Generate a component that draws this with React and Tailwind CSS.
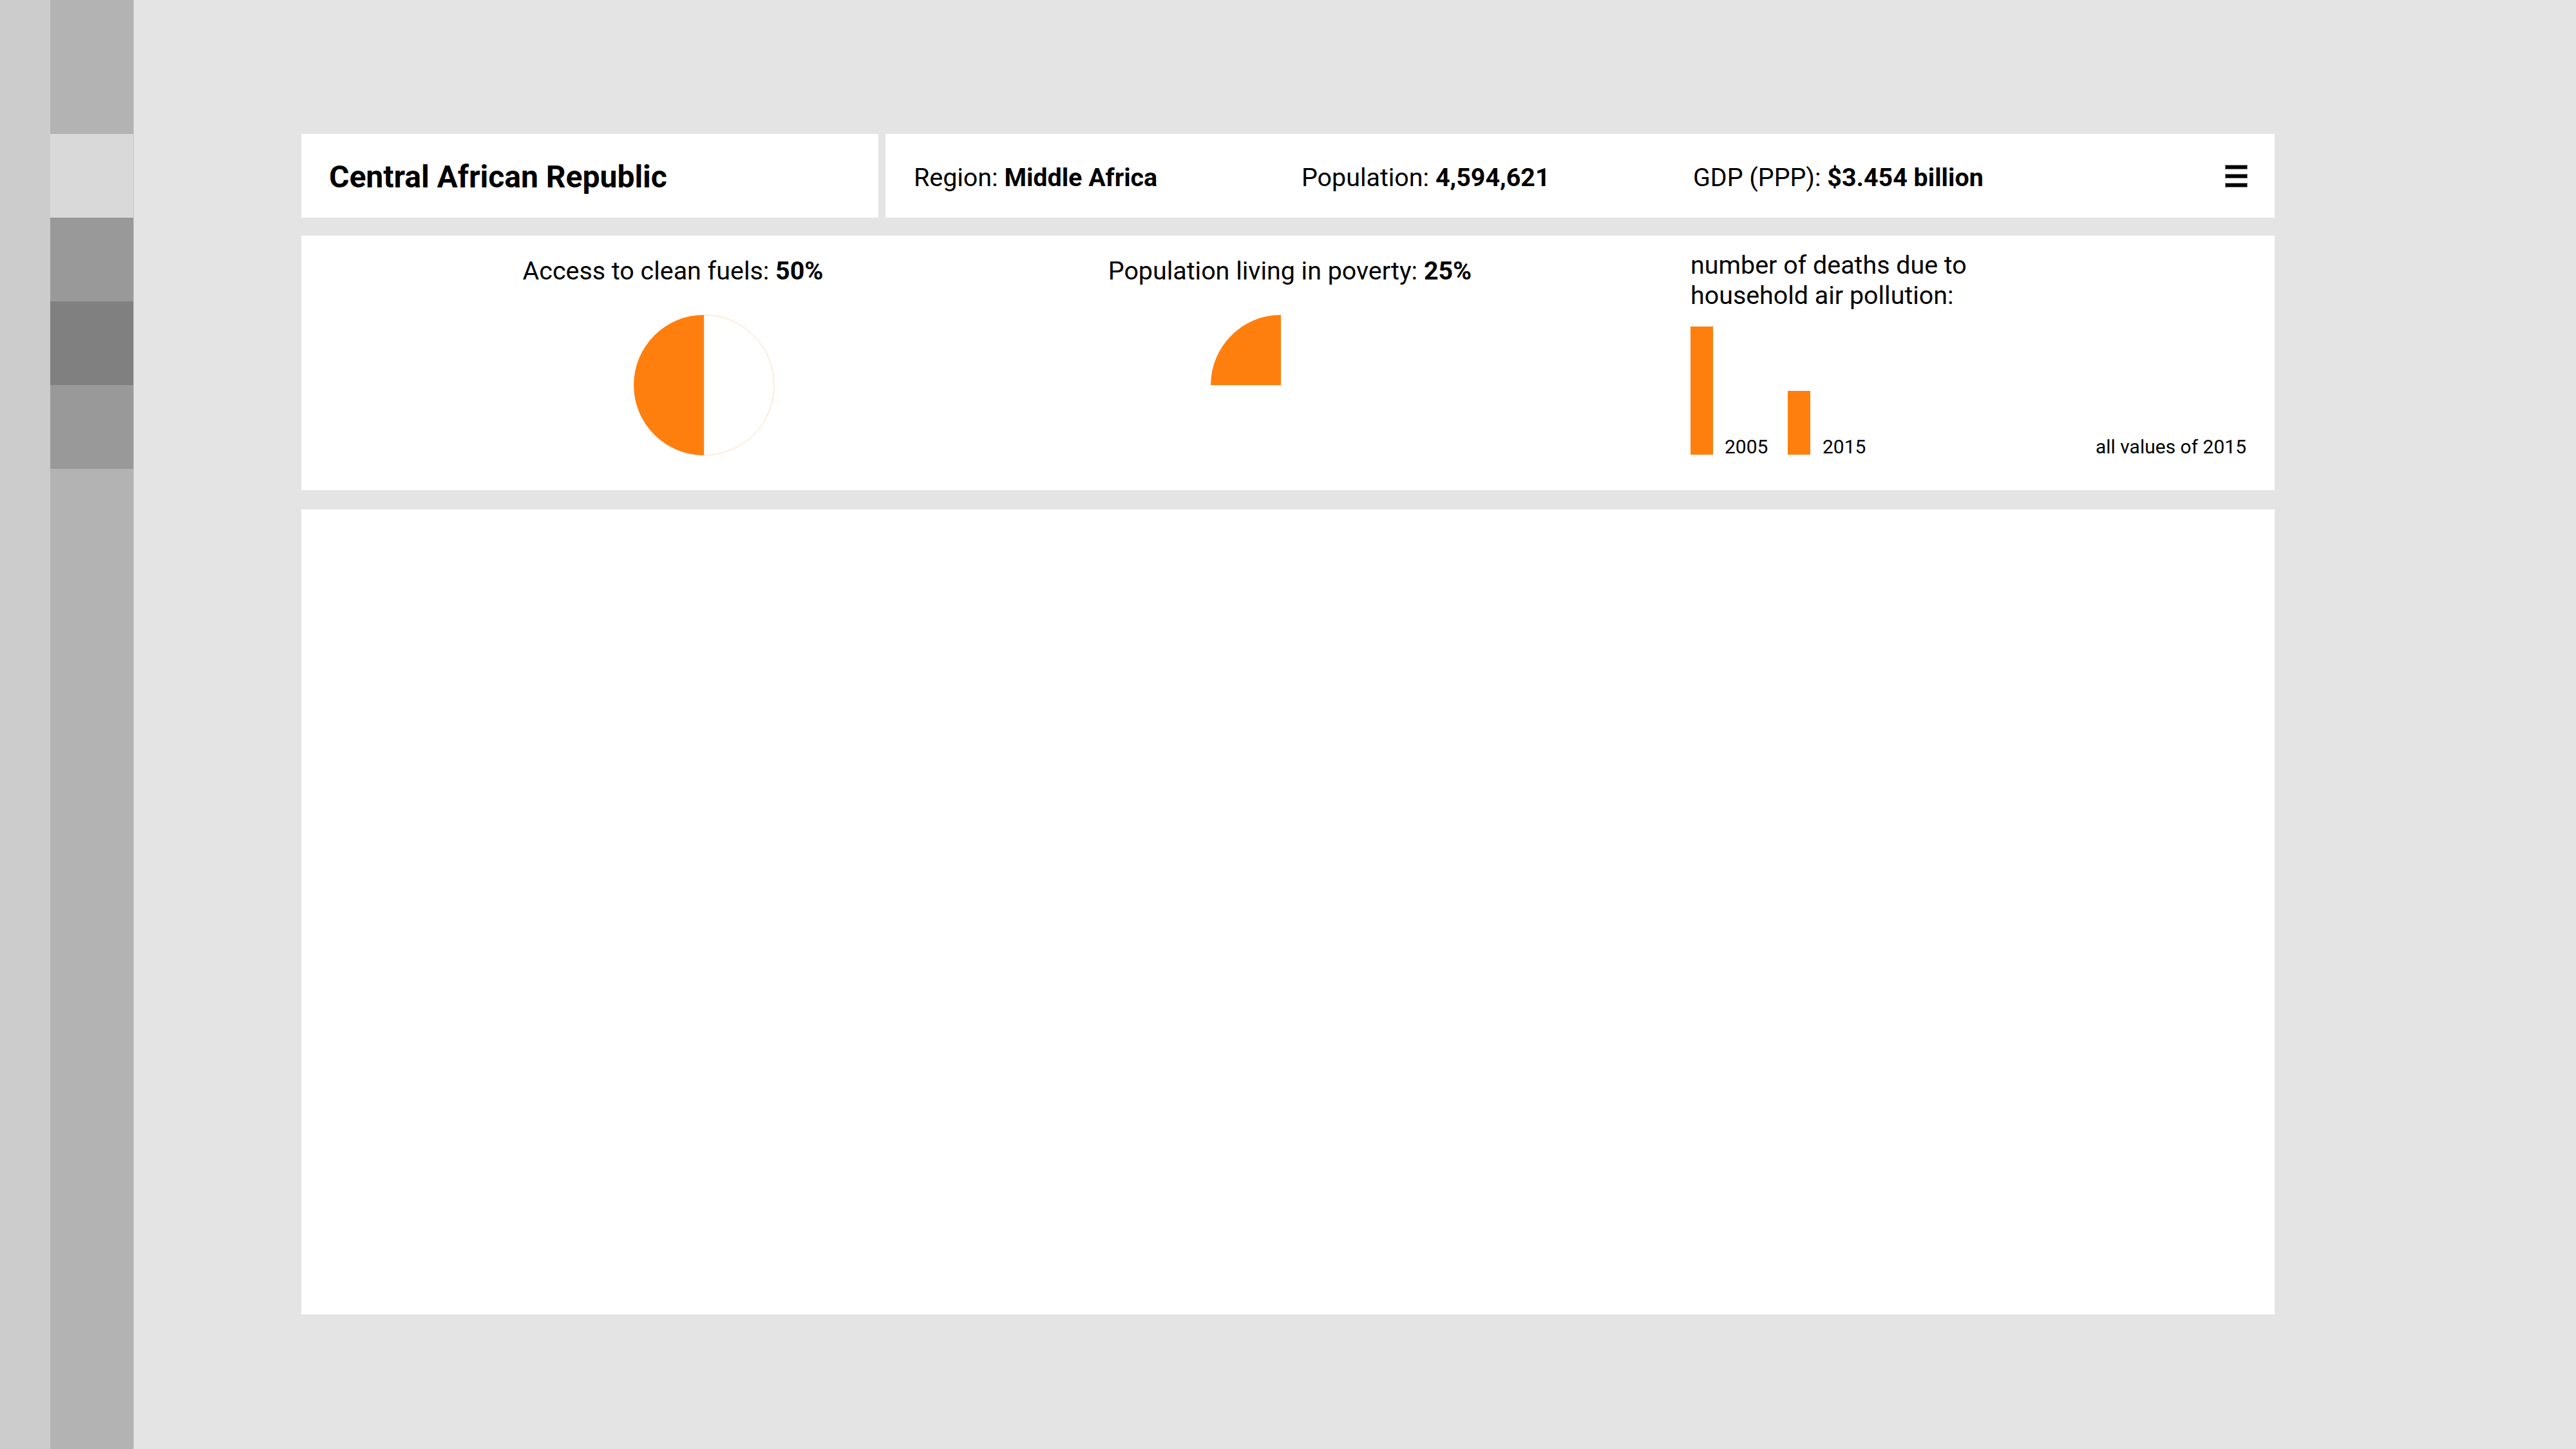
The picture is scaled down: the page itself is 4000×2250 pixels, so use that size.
import React from "react";

// d3-style orange used by every chart on the page
const ORANGE = "#ff7f0e";

const Sidebar = () => (
    <div className="flex h-[2250px] w-[208px] shrink-0">
        <div className="w-[78px] bg-[#cccccc]" />
        <div className="flex w-[130px] flex-col border-r border-[#c6c6c6]">
            <div className="h-[208px] bg-[#b3b3b3]" />
            <div className="h-[130px] bg-[#d9d9d9]" />
            <div className="h-[130px] bg-[#999999]" />
            <div className="h-[130px] bg-[#808080]" />
            <div className="h-[130px] bg-[#999999]" />
            <div className="flex-1 bg-[#b3b3b3]" />
        </div>
    </div>
);

const Burger = () => (
    <div className="flex flex-col gap-[7px]">
        <div className="h-[7px] w-[35px] border border-[#7a7a7a] bg-black" />
        <div className="h-[7px] w-[35px] border border-[#7a7a7a] bg-black" />
        <div className="h-[7px] w-[35px] border border-[#7a7a7a] bg-black" />
    </div>
);

/**
 * Camembert dessiné dans le sens inverse des aiguilles, depuis midi
 */
const Pie = ({ value, outline }) => {
    const r = 109;
    const c = 110;
    const angle = (value / 100) * Math.PI * 2;
    const x = c - r * Math.sin(angle);
    const y = c - r * Math.cos(angle);
    const large = value > 50 ? 1 : 0;
    const slice = `M${c},${c} L${c},${c - r} A${r},${r} 0 ${large} 0 ${x},${y} Z`;
    const rest = `M${c},${c} L${x},${y} A${r},${r} 0 ${1 - large} 0 ${c},${c - r} Z`;
    return (
        <svg width="220" height="220" viewBox="0 0 220 220">
            {outline && (
                <path
                    d={rest}
                    fill="#ffffff"
                    stroke={ORANGE}
                    strokeOpacity="0.3"
                    strokeWidth="1"
                />
            )}
            <path d={slice} fill={ORANGE} />
        </svg>
    );
};

const App = () => {
    return (
        <div className="flex min-h-[2250px] w-full bg-[#e4e4e4] font-['Roboto','Liberation_Sans',sans-serif] text-black">
            <Sidebar />

            <main className="flex-1 pl-[260px] pt-[208px]">
                <div className="flex w-[3064px] flex-col">
                    {/* En-tête pays */}
                    <div className="flex h-[130px] gap-[11px]">
                        <div className="flex w-[896px] items-center bg-white pl-[43px] pt-[3px]">
                            <h1 className="text-[48px] font-bold leading-[1.2]">
                                Central African Republic
                            </h1>
                        </div>
                        <div className="flex flex-1 items-center bg-white pl-[44px] pr-[42px] text-[39.4px] leading-[1.2]">
                            <div className="w-[602px] pt-[5px]">
                                Region: <span className="font-bold">Middle Africa</span>
                            </div>
                            <div className="w-[608px] pt-[5px]">
                                Population: <span className="font-bold">4,594,621</span>
                            </div>
                            <div className="flex-1 pt-[5px]">
                                GDP (PPP): <span className="font-bold">$3.454 billion</span>
                            </div>
                            <Burger />
                        </div>
                    </div>

                    {/* Indicateurs */}
                    <div className="mt-[28px] flex h-[395px] bg-white text-[39.4px] leading-[1.2]">
                        <div className="flex w-[1154px] flex-col pt-[31px]">
                            <p className="text-center">
                                Access to clean fuels: <span className="font-bold">50%</span>
                            </p>
                            <div className="ml-[515px] mt-[44px]">
                                <Pie value={50} outline />
                            </div>
                        </div>

                        <div className="flex w-[762px] flex-col pt-[31px]">
                            <p className="text-center">
                                Population living in poverty:{" "}
                                <span className="font-bold">25%</span>
                            </p>
                            <div className="ml-[257px] mt-[44px]">
                                <Pie value={25} />
                            </div>
                        </div>

                        <div className="flex flex-1 flex-col pl-[241px] pr-[44px] pt-[22px]">
                            <p>
                                number of deaths due to
                                <br />
                                household air pollution:
                            </p>
                            <div className="mt-[24px] flex h-[199px] items-end text-[30px] leading-[24px]">
                                <div className="flex w-[151px] items-end">
                                    <div className="h-[199px] w-[35px] bg-[#ff7f0e]" />
                                    <span className="ml-[18px]">2005</span>
                                </div>
                                <div className="flex items-end">
                                    <div className="h-[99px] w-[35px] bg-[#ff7f0e]" />
                                    <span className="ml-[19px]">2015</span>
                                </div>
                                <span className="ml-auto">all values of 2015</span>
                            </div>
                        </div>
                    </div>

                    {/* Zone principale */}
                    <div className="mt-[30px] h-[1250px] bg-white" />
                </div>
            </main>
        </div>
    );
};

export default App;
